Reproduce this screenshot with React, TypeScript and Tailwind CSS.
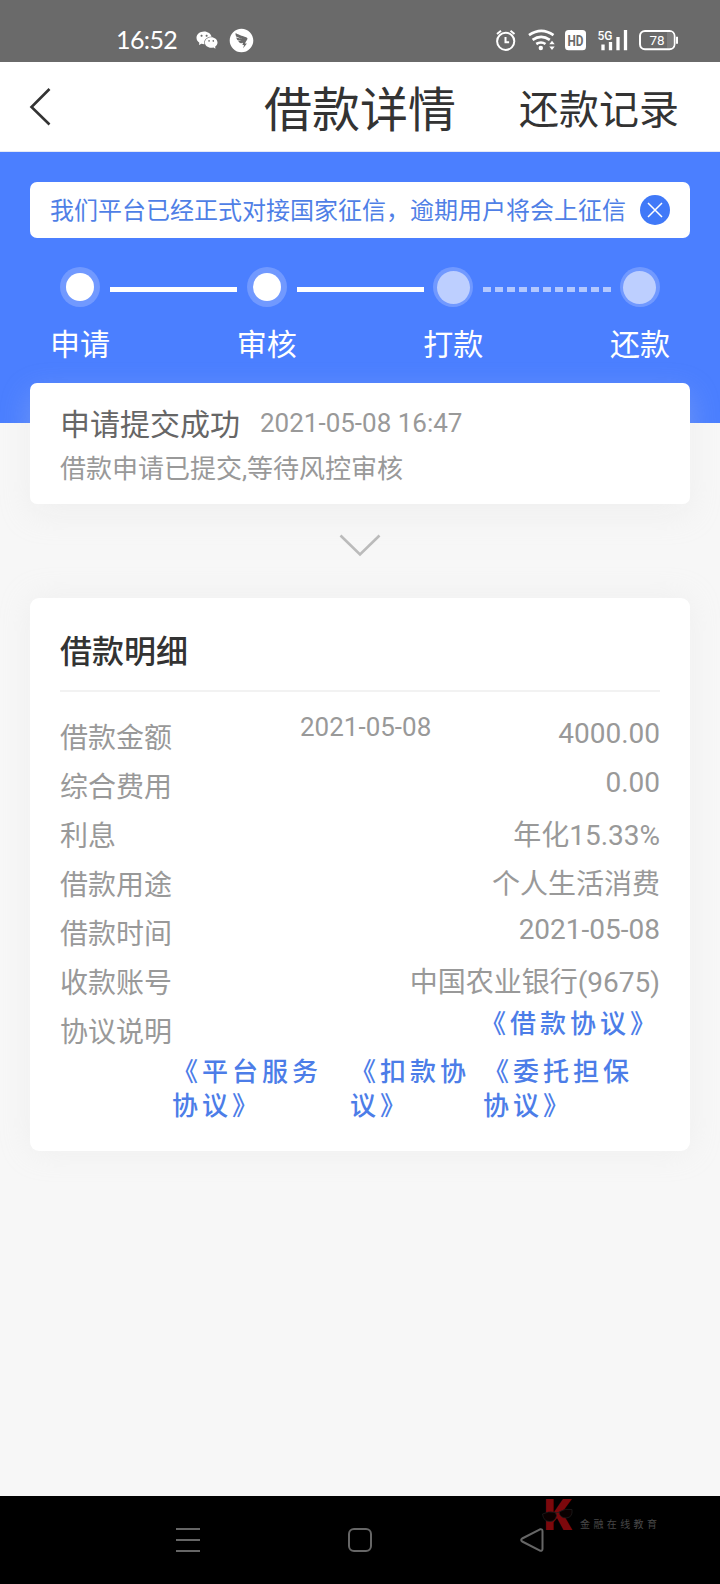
import React from "react";
import { AiFillDingtalkCircle, AiFillWechat } from "react-icons/ai";

type Step = { label: string; done: boolean; line?: "solid" | "dashed" };

const steps: Step[] = [
  { label: "申请", done: true, line: "solid" },
  { label: "审核", done: true, line: "solid" },
  { label: "打款", done: false, line: "dashed" },
  { label: "还款", done: false },
];

const rows = [
  { label: "借款金额", value: "4000.00", note: "2021-05-08", numeric: true },
  { label: "综合费用", value: "0.00", numeric: true },
  { label: "利息", value: "年化15.33%" },
  { label: "借款用途", value: "个人生活消费" },
  { label: "借款时间", value: "2021-05-08", numeric: true },
  { label: "收款账号", value: "中国农业银行(9675)" },
];

function StatusBar() {
  return (
    <div className="flex h-[62px] items-start bg-[#6a6a6a] text-white">
      <div className="mt-[23px] ml-[116px] w-[80px] font-[Lato,sans-serif] text-[25px] leading-[32px] tracking-[-0.6px]">16:52</div>
      <AiFillWechat className="mt-[28px] -ml-px h-[24px] w-[24px]" />
      <AiFillDingtalkCircle className="mt-[27px] ml-[9px] h-[27px] w-[27px]" />
      <svg className="mt-[28px] ml-auto shrink-0" width="186" height="26" viewBox="494 28 186 26" fill="none" stroke="white">
        <circle cx="505.7" cy="41.3" r="8.6" strokeWidth="2" />
        <path d="M505.5 37v5.3h3.6M497 34l4-3.2M514.5 34l-4-3.2" strokeWidth="2" />
        <path d="M529 35.2q12.300 -8.500 24.500 0M532.600 39.800q8.500 -6 17.200 0M536.300 44q4.700 -3 9.200 0" strokeWidth="2.700" />
        <circle cx="540.800" cy="48" r="2.200" fill="white" stroke="none" />
        <path d="M549.300 44.200l2.700-3.400 2.700 3.400zM549.300 46.600l2.700 3.400 2.700-3.400z" fill="white" stroke="none" />
        <rect x="565" y="30" width="21" height="20.300" rx="3.500" fill="white" stroke="none" />
        <text x="575.500" y="45.700" textAnchor="middle" textLength="16" lengthAdjust="spacingAndGlyphs" fontFamily="Roboto, sans-serif" fontWeight="700" fontSize="15" fill="#6a6a6a" stroke="none">HD</text>
        <text x="597.500" y="39.800" textLength="15" lengthAdjust="spacingAndGlyphs" fontFamily="Roboto, sans-serif" fontWeight="500" fontSize="13.500" fill="white" stroke="none">5G</text>
        <path d="M603 44.500v5.800M610.500 42v8.300M618 37v13.300M625.500 30v20.300" strokeWidth="3.300" />
        <rect x="640" y="31" width="34.500" height="18.300" rx="5" strokeWidth="2" />
        <path d="M667 32h3q3.500 0 3.500 4v8q0 4-3.500 4h-3z" fill="#7d7d7d" stroke="none" />
        <path d="M677 36.800v7" strokeWidth="2" />
        <text x="657" y="45" textAnchor="middle" fontFamily="Roboto, sans-serif" fontSize="13.500" fill="white" stroke="none">78</text>
      </svg>
      <div className="w-[40px] shrink-0" />
    </div>
  );
}

function Header() {
  return (
    <header className="grid h-[90px] grid-cols-[240px_240px_1fr] items-center border-b border-[#e4e9f5] bg-white text-[#333]">
      <svg className="ml-[29px]" width="24" height="40" viewBox="0 0 24 40" fill="none" stroke="#333" strokeWidth="2.600">
        <path d="M20.500 2 2.500 20l18 17.500" />
      </svg>
      <h1 className="pt-[8px] text-center text-[48px] leading-[56px]">借款详情</h1>
      <a className="pt-[9px] pr-[41px] text-right text-[40px] leading-[56px]">还款记录</a>
    </header>
  );
}

function StepDot({ done }: { done: boolean }) {
  return (
    <div className="flex h-[40px] w-[40px] items-center justify-center rounded-full bg-[#7199ff]">
      {done ? <div className="h-[28px] w-[28px] rounded-full bg-white" /> : <div className="h-[33px] w-[33px] rounded-full bg-[#bdcfff]" />}
    </div>
  );
}

function Progress() {
  return (
    <div className="mx-[30px] mt-[29px] flex">
      {steps.map((s) => (
        <div key={s.label} className={s.line ? "w-[186.660px]" : "w-[100px]"}>
          <div className="flex items-center">
            <div className="ml-[30px]">
              <StepDot done={s.done} />
            </div>
            {s.line === "solid" && <div className="mt-[4px] ml-[10px] h-[5px] w-[127px] shrink-0 bg-white" />}
            {s.line === "dashed" && (
              <div className="mt-[4px] ml-[10px] flex gap-[4px]">
                {Array.from({ length: 11 }, (_, i) => (
                  <div key={i} className="h-[5px] w-[8px] shrink-0 bg-[#b3c8ff]" />
                ))}
              </div>
            )}
          </div>
          <div className="mt-[19px] w-[100px] text-center text-[30px] leading-[37px] text-white">{s.label}</div>
        </div>
      ))}
    </div>
  );
}

export default function App() {
  return (
    <div className="flex h-[1584px] w-[720px] flex-col overflow-hidden bg-[#f7f7f7] font-[Roboto,'Noto_Sans_CJK_SC',sans-serif] text-[#999]">
      <StatusBar />
      <Header />
      <section className="h-[271px] shrink-0 bg-[#4b7fff] pt-[30px]">
        <div className="mx-[30px] flex h-[56px] items-center rounded-[7px] bg-white pl-[20px] text-[#4f7fe6]">
          <p className="w-[590px] pt-[2px] text-[24px] leading-[36px] whitespace-nowrap">我们平台已经正式对接国家征信，逾期用户将会上征信</p>
          <svg width="30" height="30" viewBox="0 0 30 30">
            <circle cx="15" cy="15" r="15" fill="#4079f8" />
            <path d="m8 8 14 14M22 8 8 22" stroke="#fff" strokeWidth="1.500" />
          </svg>
        </div>
        <Progress />
      </section>
      <section className="relative mx-[30px] -mt-[40px] h-[121px] shrink-0 rounded-[7px] bg-white px-[30px] pt-[20px] shadow-[0_10px_30px_rgba(220,220,220,0.25)]">
        <div className="flex items-center">
          <h2 className="w-[200px] pt-[3px] text-[30px] leading-[37px] text-[#666]">申请提交成功</h2>
          <span className="text-[26px] leading-[40px]">2021-05-08 16:47</span>
        </div>
        <p className="mt-[8px] text-[26px] leading-[36px]">借款申请已提交,等待风控审核</p>
      </section>
      <svg className="mx-auto mt-[29px] shrink-0" width="42" height="24" viewBox="0 0 42 24" fill="none" stroke="#bbb" strokeWidth="2.600">
        <path d="m1.500 2.500 19.500 19L40.500 2.500" />
      </svg>
      <section className="mx-[30px] mt-[41px] h-[553px] shrink-0 rounded-[9px] bg-white px-[30px] shadow-[0_0_30px_rgba(220,220,220,0.25)]">
        <h2 className="h-[94px] border-b-2 border-[#f2f2f2] pt-[30px] text-[32px] leading-[48px] font-medium text-[#333]">借款明细</h2>
        <div className="pt-[22px] text-[28px] leading-[49px]">
          {rows.map((r) => (
            <div key={r.label} className="flex h-[49px] items-start">
              <span className="w-[240px]">{r.label}</span>
              {r.note && <span className="-mt-[11px] text-[26px]">{r.note}</span>}
              <span className={r.numeric ? "-mt-[5px] ml-auto" : "-mt-px ml-auto"}>{r.value}</span>
            </div>
          ))}
          <div className="flex h-[49px] items-start justify-between">
            <span>协议说明</span>
            <a className="-mt-px text-[26px] leading-[34px] font-medium tracking-[4px] text-[#4c7de8]">《借款协议》</a>
          </div>
        </div>
        <div className="-mt-[2px] flex pl-[112px] text-[26px] leading-[34px] font-medium tracking-[4px] text-[#4c7de8]">
          <a className="w-[178px]">《平台服务协议》</a>
          <a className="w-[133px]">《扣款协议》</a>
          <a className="w-[177px]">《委托担保协议》</a>
        </div>
      </section>
      <nav className="mt-auto flex h-[88px] shrink-0 items-start bg-black">
        <svg className="mt-[32px] ml-[176px]" width="24" height="24" viewBox="0 0 24 24" stroke="#666" strokeWidth="2">
          <path d="M0 1h24M0 12h24M0 23h24" />
        </svg>
        <svg className="mt-[32px] ml-[148px]" width="24" height="24" viewBox="0 0 24 24" fill="none" stroke="#666" strokeWidth="2">
          <rect x="1" y="1" width="22" height="22" rx="5" />
        </svg>
        <svg className="mt-[32px] ml-[148px]" width="24" height="24" viewBox="0 0 24 24" fill="none" stroke="#666" strokeWidth="2" strokeLinejoin="round">
          <path d="M20 1.300 2.200 10.500q-2 1.500 0 3L20 22.700q2.500.5 2.500-2V3.300q0-2.500-2.500-2z" />
        </svg>
        <svg className="-ml-[2px] overflow-visible" width="32" height="36" viewBox="542 1496 32 36">
          <text x="544" y="1529.500" textLength="29" lengthAdjust="spacingAndGlyphs" fontFamily="Inter, sans-serif" fontWeight="900" fontSize="42" fill="#7c080c">K</text>
          <path d="M542.500 1514q6-3.500 13-1.500l1 3q-1 6-7 6t-7-7.500zM559 1512q6-4 13-2.500 1 8-6 8.500-6 0-7-6zM555 1513l5-1" fill="#0a0000" stroke="#202020" strokeWidth=".7" />
        </svg>
        <span className="mt-[21px] ml-[6px] text-[10px] leading-[16px] tracking-[3.400px] whitespace-nowrap text-[#484848]">金融在线教育</span>
      </nav>
    </div>
  );
}
